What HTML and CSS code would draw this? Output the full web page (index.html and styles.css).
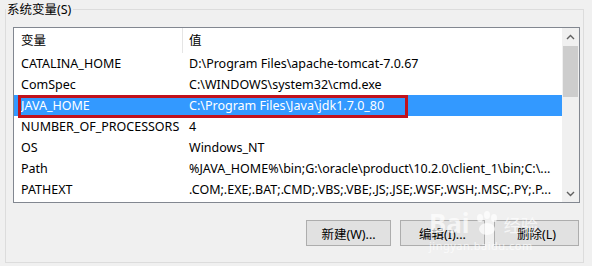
FILE: index.html
```html
<!DOCTYPE html>
<html lang="zh-CN">

<head>
    <meta charset="UTF-8">
    <title>系统变量</title>
    <link rel="stylesheet" href="styles.css">
</head>

<body>
    <fieldset class="group">
        <legend class="group-title">系统变量(S)</legend>

        <div class="list">
            <div class="list-body">
                <div class="row header">
                    <div class="cell name">变量</div>
                    <div class="cell value">值</div>
                </div>
                <div class="row">
                    <div class="cell name">CATALINA_HOME</div>
                    <div class="cell value">D:\Program Files\apache-tomcat-7.0.67</div>
                </div>
                <div class="row">
                    <div class="cell name">ComSpec</div>
                    <div class="cell value">C:\WINDOWS\system32\cmd.exe</div>
                </div>
                <div class="row selected">
                    <div class="cell name">JAVA_HOME</div>
                    <div class="cell value">C:\Program Files\Java\jdk1.7.0_80</div>
                    <div class="mark"></div>
                </div>
                <div class="row">
                    <div class="cell name">NUMBER_OF_PROCESSORS</div>
                    <div class="cell value">4</div>
                </div>
                <div class="row">
                    <div class="cell name">OS</div>
                    <div class="cell value">Windows_NT</div>
                </div>
                <div class="row">
                    <div class="cell name">Path</div>
                    <div class="cell value">%JAVA_HOME%\bin;G:\oracle\product\10.2.0\client_1\bin;C:\...</div>
                </div>
                <div class="row">
                    <div class="cell name">PATHEXT</div>
                    <div class="cell value">.COM;.EXE;.BAT;.CMD;.VBS;.VBE;.JS;.JSE;.WSF;.WSH;.MSC;.PY;.P...</div>
                </div>
            </div>

            <!-- vertical scrollbar -->
            <div class="scrollbar">
                <div class="arrow">
                    <svg width="9" height="6" viewBox="0 0 9 6">
                        <path d="M1 5 L4.5 1.5 L8 5" fill="none" stroke="#606060" stroke-width="1.4"/>
                    </svg>
                </div>
                <div class="track">
                    <div class="thumb"></div>
                </div>
                <div class="arrow">
                    <svg width="9" height="6" viewBox="0 0 9 6">
                        <path d="M1 1 L4.5 4.5 L8 1" fill="none" stroke="#606060" stroke-width="1.4"/>
                    </svg>
                </div>
            </div>
        </div>

        <div class="buttons">
            <button class="btn">新建(W)...</button>
            <button class="btn">编辑(I)...</button>
            <button class="btn">删除(L)</button>
        </div>

        <!-- watermark -->
        <div class="watermark">
            <div class="wm-top">
                <span class="wm-bai">Bai</span>
                <svg class="wm-paw" width="30" height="26" viewBox="0 0 30 26">
                    <ellipse cx="8" cy="7" rx="3" ry="4"/>
                    <ellipse cx="15" cy="4" rx="3" ry="4"/>
                    <ellipse cx="22" cy="7" rx="3" ry="4"/>
                    <ellipse cx="15" cy="18" rx="8" ry="6"/>
                </svg>
                <span class="wm-jy">经验</span>
            </div>
            <div class="wm-url">jingyan.baidu.com</div>
        </div>
    </fieldset>
</body>

</html>
```

FILE: styles.css
```css
:root {
    --dialog-bg: #f0f0f0;
    --group-border: #dcdcdc;
    --list-border: #828790;
    --select-bg: #3399ff;
    --mark-color: #c1121c;
    --btn-bg: #e1e1e1;
    --btn-border: #adadad;
}

* {
    margin: 0;
    padding: 0;
    box-sizing: border-box;
    font-family: 'Noto Sans', 'Noto Sans CJK SC', sans-serif;
}

body {
    background: var(--dialog-bg);
    color: #000;
    font-size: 12.5px;
    width: 592px;
    height: 266px;
    overflow: hidden;
}

.group {
    position: relative;
    margin: 1px 8px 0 5px;
    padding: 9px 3px 16px 7px;
    border: 1px solid var(--group-border);
    min-width: 0;
}

.group-title {
    margin-left: -7px;
    padding: 0 2px 0 1px;
    font-size: 12.5px;
    line-height: 17px;
    color: #000;
}

.list {
    display: flex;
    height: 176px;
    background: #fff;
    border: 1px solid var(--list-border);
}

.list-body {
    flex: 1;
}

.row {
    position: relative;
    display: flex;
    height: 21px;
    line-height: 21px;
    white-space: nowrap;
}

.row.header {
    height: 25px;
    line-height: 25px;
}

.cell.name {
    width: 169px;
    padding-left: 7px;
}

.row.header .cell.name {
    border-right: 1px solid #e5e5e5;
}

.cell.value {
    padding-left: 6px;
}

.row.selected {
    background: var(--select-bg);
    color: #fff;
}

.row.selected .mark {
    position: absolute;
    left: 4px;
    top: 0;
    width: 390px;
    height: 23px;
    border: 3px solid var(--mark-color);
}

.scrollbar {
    display: flex;
    flex-direction: column;
    width: 17px;
    background: var(--dialog-bg);
}

.arrow {
    height: 17px;
    display: flex;
    align-items: center;
    justify-content: center;
}

.track {
    flex: 1;
    padding: 1px 1px 0 1px;
}

.thumb {
    height: 51px;
    background: #cdcdcd;
}

.buttons {
    display: flex;
    justify-content: flex-end;
    gap: 9px;
    margin-top: 17px;
    padding-right: 1px;
}

.btn {
    width: 85px;
    height: 26px;
    background: var(--btn-bg);
    border: 1px solid var(--btn-border);
    font-size: 12.5px;
    color: #000;
}

.watermark {
    position: absolute;
    left: 423px;
    top: 192px;
    color: rgba(255, 255, 255, 0.7);
    pointer-events: none;
}

.wm-top {
    display: flex;
    align-items: flex-end;
    gap: 2px;
}

.wm-bai {
    font-size: 26px;
    font-weight: 700;
    line-height: 27px;
}

.wm-paw {
    fill: rgba(255, 255, 255, 0.7);
}

.wm-jy {
    font-size: 17px;
    line-height: 22px;
}

.wm-url {
    font-size: 11px;
    letter-spacing: 0.5px;
    margin-top: 1px;
}
```
